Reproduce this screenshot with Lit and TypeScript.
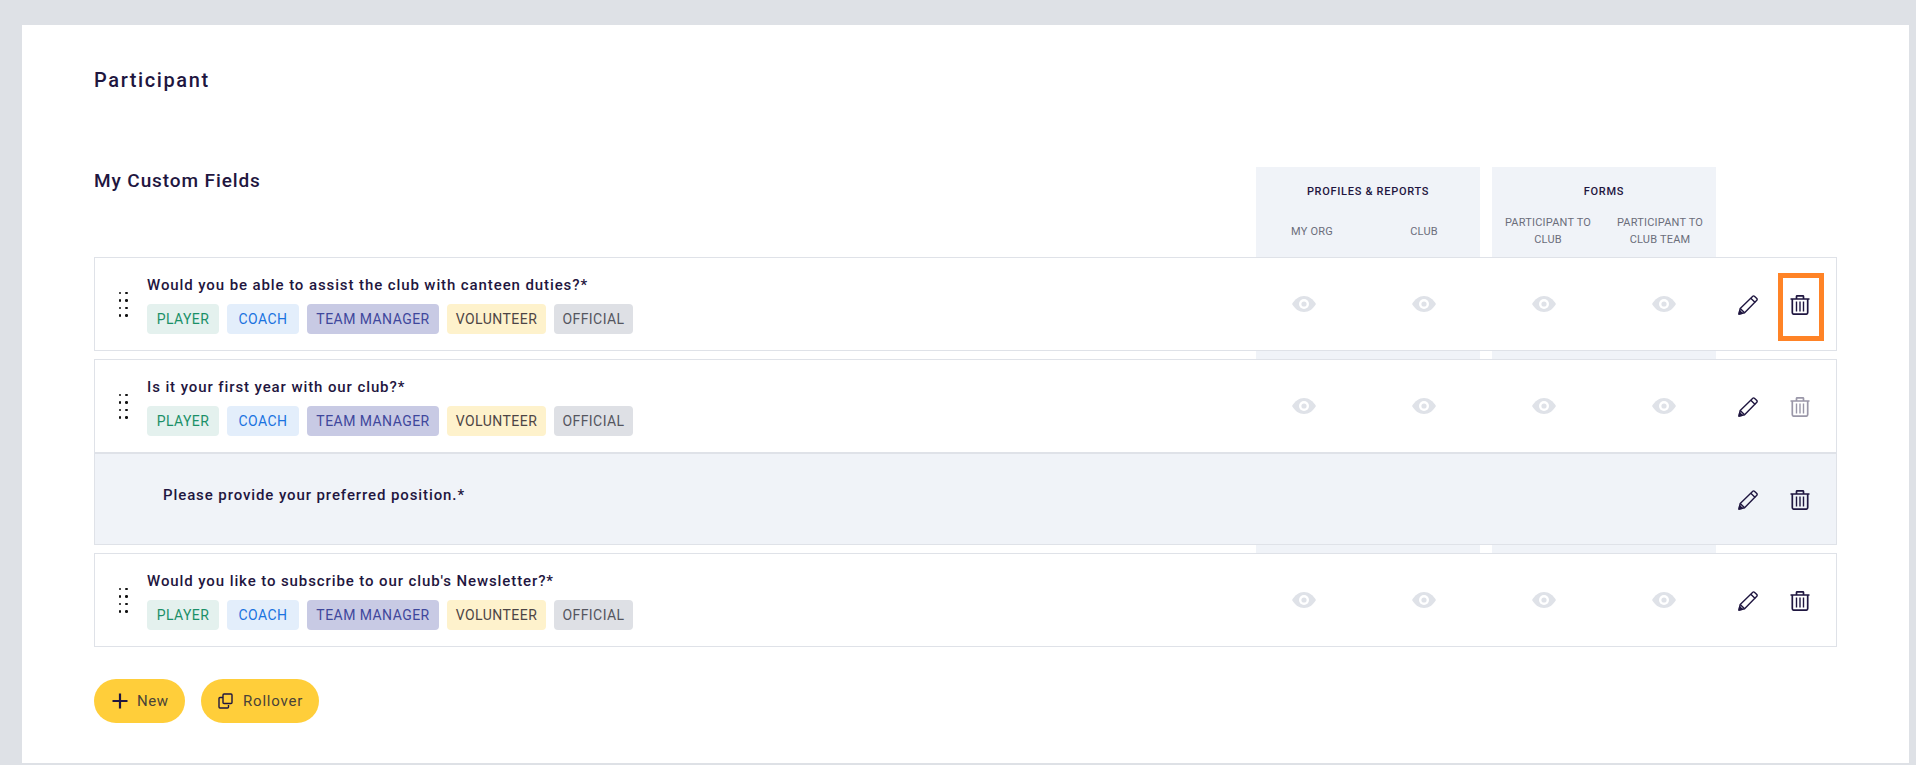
import { html, css, LitElement, svg } from "lit";
import { customElement } from "lit/decorators.js";

interface Field {
  title: string;
  nested?: boolean;
  trashOff?: boolean;
  marked?: boolean;
}

const FIELDS: Field[] = [
  { title: "Would you be able to assist the club with canteen duties?*", marked: true },
  { title: "Is it your first year with our club?*", trashOff: true },
  { title: "Please provide your preferred position.*", nested: true },
  { title: "Would you like to subscribe to our club's Newsletter?*" },
];

const CHIPS = [
  { label: "PLAYER", cls: "player" },
  { label: "COACH", cls: "coach" },
  { label: "TEAM MANAGER", cls: "manager" },
  { label: "VOLUNTEER", cls: "volunteer" },
  { label: "OFFICIAL", cls: "official" },
];

const eye = html`<svg class="eye" width="24" height="16" viewBox="0 0 24 16">
  <path d="M0 8C3 3 7 0 12 0s9 3 12 8c-3 5-7 8-12 8S3 13 0 8z" fill="#dfe2e8"></path>
  <circle cx="12" cy="8" r="5" fill="#fff"></circle>
  <circle cx="12" cy="8" r="2.6" fill="#dfe2e8"></circle>
</svg>`;

const pencil = html`<svg width="20" height="20" viewBox="0 0 20 20" fill="none" stroke="#1f1640" stroke-width="1.4" stroke-linejoin="round">
  <path d="M1 19l1.2-5.6L14.8 1.2c.5-.5 1.1-.5 1.6 0l2.4 2.4c.5.5.5 1.1 0 1.6L6.6 17.8z"></path>
  <path d="M2.2 13.4l4.4 4.4M12.8 3.2l4.4 4.4"></path>
  ${svg`<path d="M1 19l.7-3.2 2.5 2.5z" fill="#1f1640"></path>`}
</svg>`;

const trash = html`<svg width="20" height="20" viewBox="0 0 20 20" fill="none" stroke="currentColor" stroke-width="1.7">
  <path d="M0.5 4h19M6.5 4V1.600c0-.5.3-.8.8-.8h5.400c.5 0 .8.3.8.8V4"></path>
  <path d="M2.300 4v13.400c0 1 .6 1.800 1.800 1.800h11.800c1.200 0 1.800-.8 1.800-1.800V4"></path>
  <path d="M6.500 6.500V16.500M10 6.500V16.500M13.500 6.500V16.500" stroke-width="1.400"></path>
</svg>`;

const plus = html`<svg width="16" height="16" viewBox="0 0 16 16" fill="none" stroke="#1f1640" stroke-width="2.2">
  <path d="M8 0.500v15M0.500 8h15"></path>
</svg>`;

const copy = html`<svg width="15" height="16" viewBox="0 0 15 16" fill="none" stroke="#1f1640" stroke-width="1.4" stroke-linejoin="round">
  <rect x="5" y="1" width="9" height="9.500" rx="1"></rect>
  <path d="M5 4.500H2C1.400 4.500 1 4.900 1 5.500V14c0 .6.400 1 1 1h7.500c.6 0 1-.4 1-1v-2"></path>
</svg>`;

@customElement("app-root")
export class AppRoot extends LitElement {
  static styles = css`
    :host {
      display: block;
      height: 765px;
      overflow: hidden;
      box-sizing: border-box;
      padding: 25px 7px 2px 22px;
      background: #dee1e6;
      font-family: "Roboto", sans-serif;
      color: #1f1640;
    }

    .panel {
      height: 100%;
      box-sizing: border-box;
      padding: 41px 72px 0;
      background: #fff;
    }

    h1,
    h2 {
      margin: 0;
      line-height: 28px;
      font-weight: 500;
    }

    h1 {
      font-size: 20px;
      letter-spacing: 1.6px;
    }

    h2 {
      height: 90px;
      font-size: 19px;
      letter-spacing: 0.9px;
    }

    .board {
      display: grid;
      margin-top: 73px;
    }

    .board > * {
      grid-area: 1 / 1;
      min-width: 0;
    }

    .backdrop {
      display: flex;
      justify-content: flex-end;
      gap: 12px;
      padding: 0 121px 94px 0;
    }

    .group {
      width: 224px;
      background: #f0f3f8;
      text-align: center;
      font-size: 11px;
      line-height: 17px;
    }

    .group-label {
      padding-top: 16px;
      font-weight: 500;
      letter-spacing: 0.7px;
    }

    .subs {
      display: flex;
      margin-top: 14px;
      height: 34px;
      align-items: center;
      color: #6b6e7b;
      letter-spacing: 0.2px;
    }

    .subs span {
      flex: 0 0 112px;
    }

    .content {
      display: flex;
      flex-direction: column;
    }

    .rows {
      display: flex;
      flex-direction: column;
      gap: 8px;
    }

    .row {
      display: flex;
      align-items: center;
      box-sizing: border-box;
      height: 94px;
      padding-right: 12px;
      background: #fff;
      border: 1px solid #dfe2e8;
    }

    .row.nested {
      height: 92px;
      margin-top: -8px;
      background: #f0f3f8;
    }

    .handle {
      flex: 0 0 48px;
      padding-left: 4px;
      display: grid;
      grid-template-columns: 2.500px 2.500px;
      grid-auto-rows: 2.500px;
      gap: 5px 4px;
      justify-content: center;
    }

    .handle i {
      background: #111;
      border-radius: 50%;
    }

    .main {
      flex: 1;
      min-width: 0;
    }

    .nested .main {
      padding-left: 68px;
      align-self: flex-start;
      padding-top: 31px;
    }

    .title {
      font-size: 15px;
      line-height: 20px;
      font-weight: 500;
      letter-spacing: 0.9px;
      white-space: nowrap;
    }

    .chips {
      display: flex;
      gap: 8px;
      margin-top: 9px;
    }

    .chip {
      height: 30px;
      line-height: 30px;
      text-align: center;
      border-radius: 4px;
      font-size: 14px;
      letter-spacing: 0.45px;
      white-space: nowrap;
    }

    .player {
      width: 72px;
      background: #e4f1ee;
      color: #1a9068;
    }

    .coach {
      width: 72px;
      background: #e3eefb;
      color: #1a73e0;
    }

    .manager {
      width: 132px;
      background: #c8cae4;
      color: #3f479c;
    }

    .volunteer {
      width: 99px;
      background: #fef2cc;
      color: #4d4545;
    }

    .official {
      width: 79px;
      background: #dee0e5;
      color: #55565f;
    }

    .eyes {
      display: flex;
      flex: 0 0 480px;
    }

    .eye-cell {
      flex: 0 0 120px;
      display: flex;
      justify-content: center;
    }

    .actions {
      display: flex;
      gap: 4px;
      margin-top: 1px;
    }

    .action {
      position: relative;
      width: 48px;
      height: 20px;
      display: flex;
      justify-content: center;
      color: #1f1640;
    }

    .action.off {
      color: #9a97a8;
    }

    .mark {
      position: absolute;
      left: 2px;
      top: -22px;
      width: 46px;
      height: 68px;
      box-sizing: border-box;
      border: 5px solid #ff8326;
    }

    .buttons {
      display: flex;
      gap: 16px;
      margin-top: 32px;
    }

    .btn {
      display: flex;
      align-items: center;
      height: 44px;
      box-sizing: border-box;
      border-radius: 22px;
      background: #ffce3a;
      font-size: 15px;
      letter-spacing: 0.6px;
      color: #4a4338;
    }

    .btn.new {
      width: 91px;
      padding-left: 18px;
      gap: 9px;
    }

    .btn.rollover {
      width: 118px;
      padding-left: 17px;
      gap: 10px;
      letter-spacing: 0.8px;
    }
  `;

  private renderRow(f: Field) {
    return html`
      <div class="row ${f.nested ? "nested" : ""}">
        ${f.nested
          ? null
          : html`<div class="handle">
              ${Array.from({ length: 8 }, () => html`<i></i>`)}
            </div>`}
        <div class="main">
          <div class="title">${f.title}</div>
          ${f.nested
            ? null
            : html`<div class="chips">
                ${CHIPS.map((c) => html`<span class="chip ${c.cls}">${c.label}</span>`)}
              </div>`}
        </div>
        ${f.nested
          ? null
          : html`<div class="eyes">
              ${[0, 1, 2, 3].map(() => html`<div class="eye-cell">${eye}</div>`)}
            </div>`}
        <div class="actions">
          <div class="action">${pencil}</div>
          <div class="action ${f.trashOff ? "off" : ""}">
            ${trash}${f.marked ? html`<div class="mark"></div>` : null}
          </div>
        </div>
      </div>
    `;
  }

  override render() {
    return html`
      <div class="panel">
        <h1>Participant</h1>
        <div class="board">
          <div class="backdrop">
            <div class="group">
              <div class="group-label">PROFILES &amp; REPORTS</div>
              <div class="subs"><span>MY ORG</span><span>CLUB</span></div>
            </div>
            <div class="group">
              <div class="group-label">FORMS</div>
              <div class="subs">
                <span>PARTICIPANT TO CLUB</span><span>PARTICIPANT TO CLUB TEAM</span>
              </div>
            </div>
          </div>
          <div class="content">
            <h2>My Custom Fields</h2>
            <div class="rows">${FIELDS.map((f) => this.renderRow(f))}</div>
            <div class="buttons">
              <div class="btn new">${plus}New</div>
              <div class="btn rollover">${copy}Rollover</div>
            </div>
          </div>
        </div>
      </div>
    `;
  }
}
